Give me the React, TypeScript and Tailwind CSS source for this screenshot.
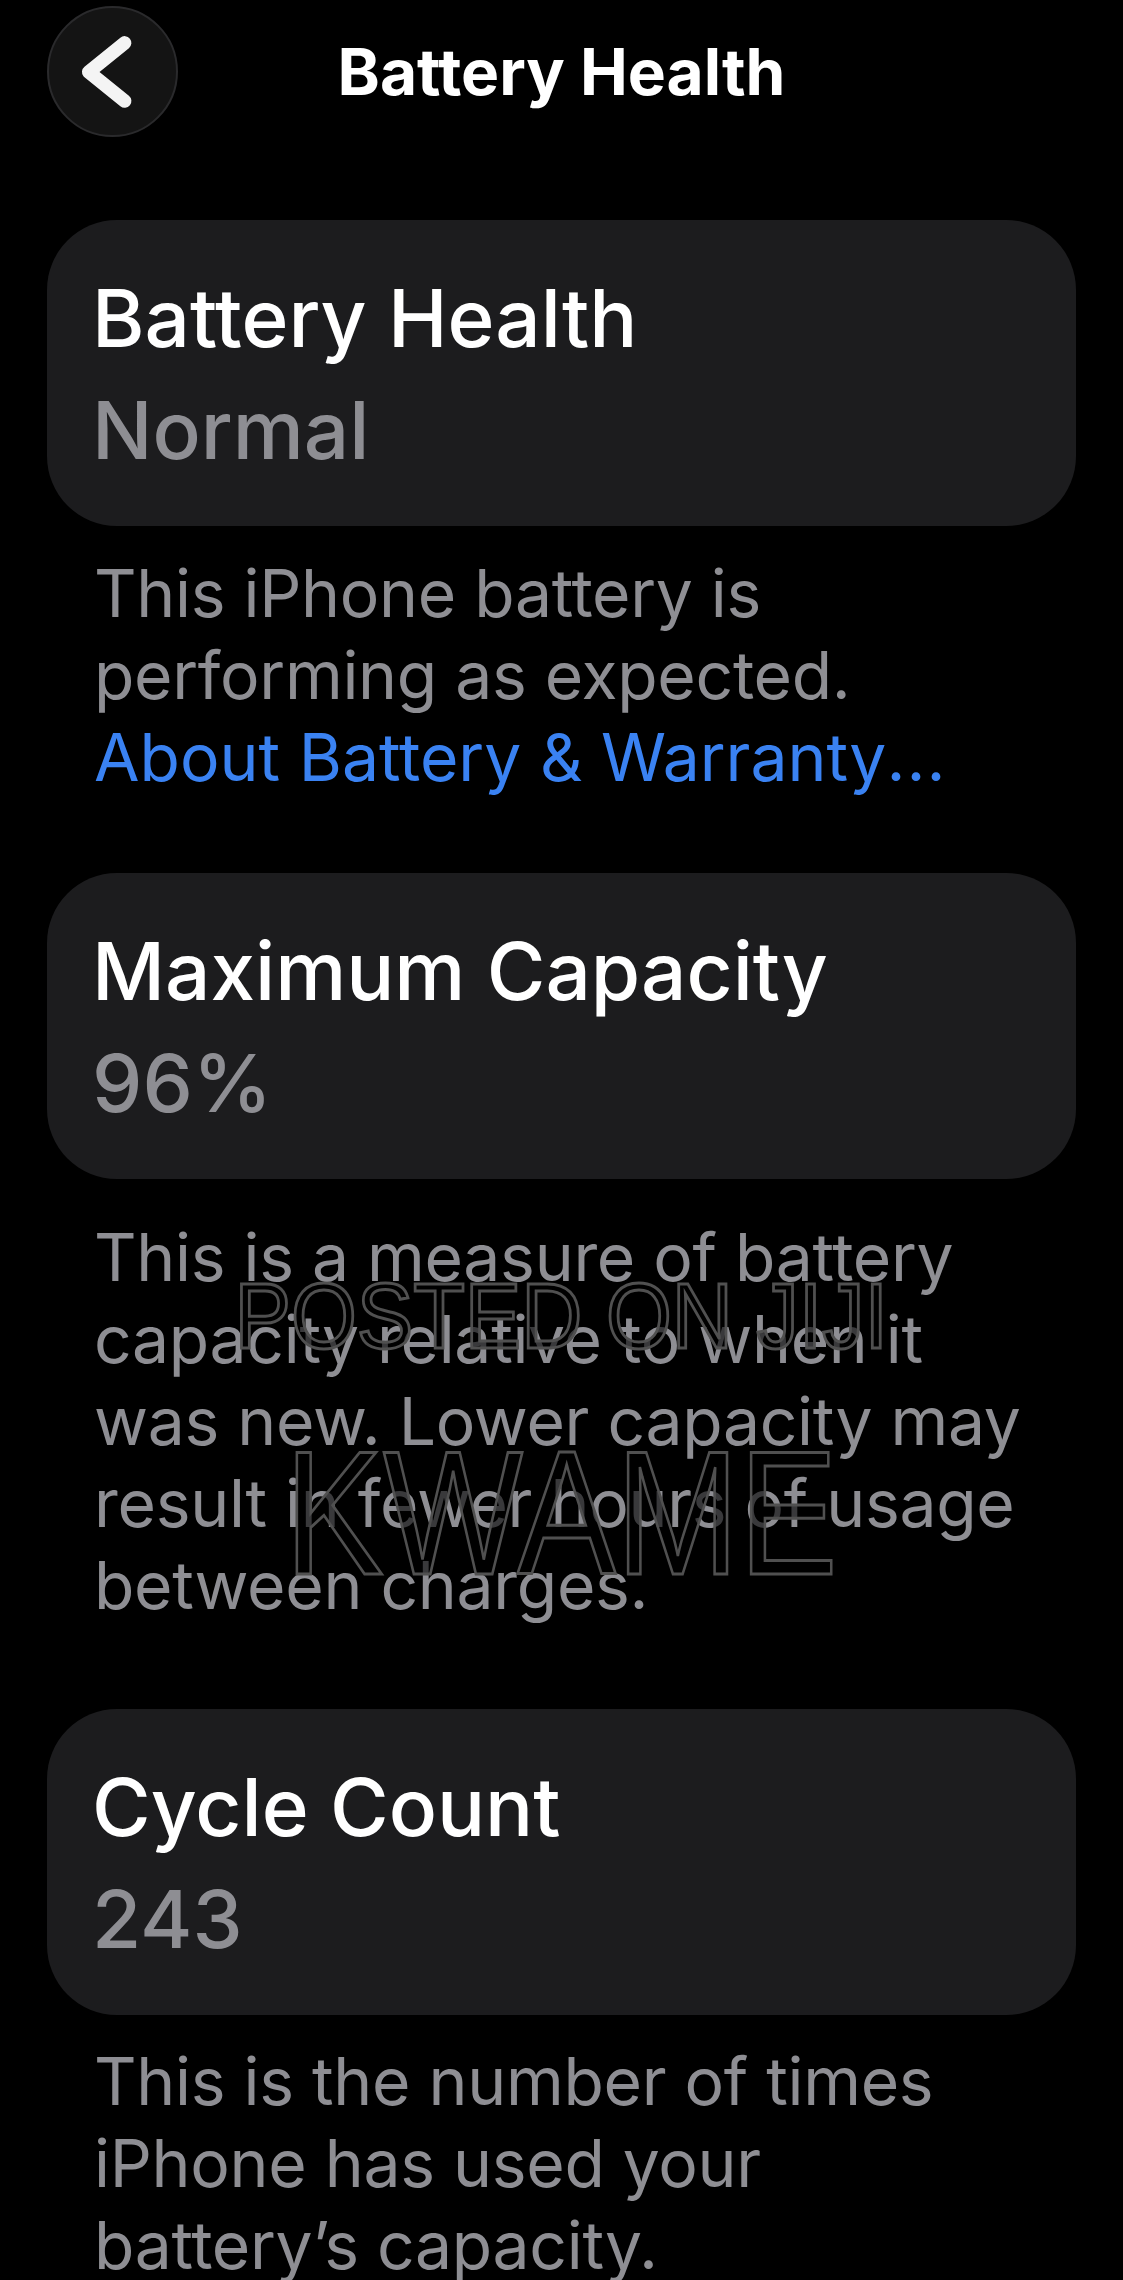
import React from 'react';

const font = 'font-["Inter","Noto_Sans",sans-serif]';

interface CardProps {
  title: string;
  value: string;
  className?: string;
}

const InfoCard: React.FC<CardProps> = ({ title, value, className = '' }) => (
  <div className={`bg-[#1c1c1e] rounded-[70px] pl-[45px] pr-[40px] pt-[42px] pb-[40px] ${className}`}>
    <p className="text-[80px] leading-[112px] font-medium text-white">{title}</p>
    <p className="text-[80px] leading-[112px] font-medium text-[#8e8e93]">{value}</p>
  </div>
);

const Footnote: React.FC<{ lines: React.ReactNode[]; className?: string }> = ({ lines, className = '' }) => (
  <div className={`pl-[47px] text-[66px] leading-[82px] text-[#8e8e93] tracking-[-0.3px] ${className}`}>
    {lines.map((l, i) => (
      <p key={i} className="whitespace-nowrap">{l}</p>
    ))}
  </div>
);

export default function App() {
  return (
    <div className={`relative w-full h-[2280px] overflow-hidden bg-black ${font}`}>
      <div className="px-[47px]">
        {/* nav bar */}
        <div className="pt-[6px] grid grid-cols-[131px_1fr_131px] items-center">
          <button className="w-[131px] h-[131px] rounded-full bg-[#141414] border-2 border-[#2a2a2c] flex items-center justify-center">
            <svg width="131" height="131" viewBox="0 0 131 131" fill="none">
              <path d="M78 36 L41 66 L78 96" stroke="#f4f4f4" strokeWidth="14" strokeLinecap="round" strokeLinejoin="round" />
            </svg>
          </button>
          <h1 className="text-center text-[64px] leading-none font-bold text-white">Battery Health</h1>
          <div />
        </div>

        <InfoCard title="Battery Health" value="Normal" className="mt-[83px]" />
        <Footnote
          className="mt-[26px]"
          lines={[
            'This iPhone battery is',
            'performing as expected.',
            <span className="text-[#3a82f2] tracking-normal">
              About Battery &amp; Warranty<span className="tracking-[1px]">...</span>
            </span>,
          ]}
        />

        <InfoCard title="Maximum Capacity" value="96%" className="mt-[75px]" />
        <Footnote
          className="mt-[37px]"
          lines={[
            'This is a measure of battery',
            'capacity relative to when it',
            'was new. Lower capacity may',
            'result in fewer hours of usage',
            'between charges.',
          ]}
        />

        <InfoCard title="Cycle Count" value="243" className="mt-[83px]" />
        <Footnote
          className="mt-[25px]"
          lines={[
            'This is the number of times',
            'iPhone has used your',
            'battery’s capacity.',
          ]}
        />
      </div>

      {/* watermark */}
      <div className='absolute inset-x-0 top-[1270px] flex justify-center pointer-events-none font-["Liberation_Sans",Arial,sans-serif]'>
        <span className="text-[92px] leading-none text-black/60 [-webkit-text-stroke:3px_#505050] scale-x-[0.92] whitespace-nowrap">POSTED ON JIJI</span>
      </div>
      <div className='absolute inset-x-0 top-[1425px] flex justify-center pointer-events-none font-["Liberation_Sans",Arial,sans-serif]'>
        <span className="text-[176px] leading-none text-black/60 [-webkit-text-stroke:3px_#505050] scale-x-[0.84] whitespace-nowrap">KWAME</span>
      </div>
    </div>
  );
}
